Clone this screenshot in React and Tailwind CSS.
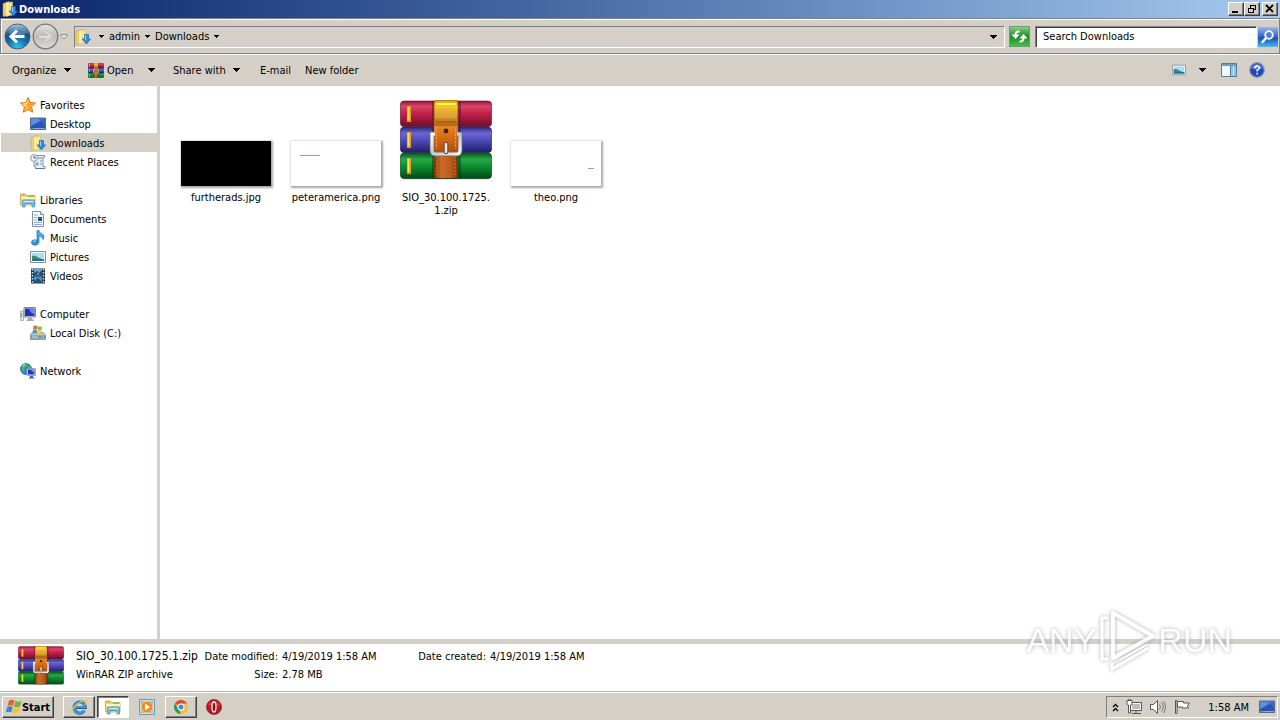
import React from "react";

function ArchiveIcon({ className }) {
  const books = [
    { y: 1, id: "book-red", dark: "#5e0d24" },
    { y: 27, id: "book-blue", dark: "#1f1a5c" },
    { y: 53, id: "book-green", dark: "#043d14" },
  ];
  return (
    <svg viewBox="0 0 92 80" preserveAspectRatio="none" className={className} aria-hidden="true">
      <defs>
        <linearGradient id="book-red" x2="0" y2="1">
          <stop offset="0" stopColor="#8c1838" />
          <stop offset=".2" stopColor="#dc4468" />
          <stop offset=".5" stopColor="#c0204a" />
          <stop offset="1" stopColor="#6e0f2a" />
        </linearGradient>
        <linearGradient id="book-blue" x2="0" y2="1">
          <stop offset="0" stopColor="#2d2878" />
          <stop offset=".25" stopColor="#6a66d4" />
          <stop offset=".55" stopColor="#4b47b4" />
          <stop offset="1" stopColor="#221d66" />
        </linearGradient>
        <linearGradient id="book-green" x2="0" y2="1">
          <stop offset="0" stopColor="#07591c" />
          <stop offset=".25" stopColor="#27a848" />
          <stop offset=".55" stopColor="#0b8a2c" />
          <stop offset="1" stopColor="#04481a" />
        </linearGradient>
        <linearGradient id="belt-top" x2="0" y2="1">
          <stop offset="0" stopColor="#d8a400" />
          <stop offset=".25" stopColor="#f4cc20" />
          <stop offset=".55" stopColor="#d9962a" />
          <stop offset="1" stopColor="#b0600f" />
        </linearGradient>
        <linearGradient id="belt-mid" x2="0" y2="1">
          <stop offset="0" stopColor="#e2862a" />
          <stop offset=".4" stopColor="#d96b12" />
          <stop offset="1" stopColor="#a84a08" />
        </linearGradient>
        <linearGradient id="belt-low" x2="1" y2="0">
          <stop offset="0" stopColor="#7e3408" />
          <stop offset=".3" stopColor="#cc6c26" />
          <stop offset=".7" stopColor="#bc5c1c" />
          <stop offset="1" stopColor="#7e3408" />
        </linearGradient>
        <linearGradient id="buckle" x2="1" y2="1">
          <stop offset="0" stopColor="#ffffff" />
          <stop offset=".5" stopColor="#c4c8cc" />
          <stop offset="1" stopColor="#f4f4f4" />
        </linearGradient>
      </defs>
      {books.map((b) => (
        <g key={b.id}>
          <rect x=".3" y={b.y} width="91.400" height="25.700" rx="4" fill={`url(#${b.id})`} stroke={b.dark} strokeWidth=".6" />
          <path d={`M7 ${b.y + 5}h4v16h-4z`} fill="#e89a1c" />
          <path d={`M8.500 ${b.y + 6}v13`} stroke="#ffe050" strokeWidth="1.800" />
          <rect x="32" y={b.y} width="29" height="25.700" fill={b.dark} opacity=".5" />
        </g>
      ))}
      <path d="M34 3q0-3 3-3h18q3 0 3 3v24H34z" fill="url(#belt-top)" stroke="#8f5208" strokeWidth=".7" />
      <path d="M35 12q11-8 22 0v6H35z" fill="#e8b040" opacity=".5" />
      <path d="M36 4h20" stroke="#fff27a" strokeWidth="2" />
      <path d="M36 22h20" stroke="#8f4f10" strokeWidth="1.500" opacity=".6" />
      <path d="M34 26h24v28H34z" fill="url(#belt-mid)" />
      <path d="M36.500 27v22M55.500 27v22" stroke="#f4a348" strokeDasharray="2 1.500" />
      <circle cx="46" cy="31" r="2.400" fill="#4e1c04" />
      <path d="M34 54h24v22q0 2-3 2H37q-3 0-3-2z" fill="url(#belt-low)" />
      <path d="M37 56v19M55 56v19" stroke="#efa04c" strokeDasharray="2 1.500" opacity=".7" />
      <path d="M34 34h-2v16q0 4 3 4h22q3 0 3-4V34h-2" fill="none" stroke="#6a6a6e" strokeWidth="4.600" />
      <path d="M35 34h-3v16q0 4 3 4h22q3 0 3-4V34h-3" fill="none" stroke="url(#buckle)" strokeWidth="3.200" />
      <path d="M46 44v8" stroke="#63432c" strokeWidth="4.600" strokeLinecap="round" />
      <path d="M46 44v8" stroke="#e6e8ea" strokeWidth="2.600" strokeLinecap="round" />
    </svg>
  );
}

function Icon({ children, className = "size-4" }) {
  return (
    <svg viewBox="0 0 16 16" className={`${className} shrink-0`} fill="none" aria-hidden="true">
      {children}
    </svg>
  );
}

const DownloadsIcon = ({ className }) => (
  <Icon className={className}>
    <path d="M1 2.500 7 .500v14l-6 1z" fill="#f0d070" stroke="#c79e35" strokeWidth=".5" />
    <path d="M4 1.500 10.500 1v13L4 15.500z" fill="#f9e48e" stroke="#d8b452" strokeWidth=".5" />
    <path d="M5 2v12" stroke="#fffbe0" />
    <path d="M9.500 5.500h4v4.500h2L11.500 15 7 10h2.500z" fill="#2f8ed8" stroke="#1468ac" strokeWidth=".7" />
    <path d="M10.500 6v5" stroke="#8bd0f8" />
  </Icon>
);

const StarIcon = () => (
  <Icon>
    <path d="m8 .600 2.200 4.900 5.300.6-3.900 3.700 1 5.400L8 12.600l-4.600 2.600 1-5.400L.500 6.100l5.300-.6z" fill="#fdbb3c" stroke="#d0761a" />
    <path d="M8 3 6.500 6.500l-3.500.5 3 2" stroke="#fff0a6" />
    <path d="m8 3 1.500 3.500 3.500.5-2.700 2.400.7 3.600-3-1.700z" fill="#f99a22" />
  </Icon>
);

const DesktopIcon = () => (
  <Icon>
    <path d="M.500 2h15v11.500H.500z" fill="#2b55b4" stroke="#54688c" />
    <path d="M1 2.500h14L1 10z" fill="#5f8fdc" />
    <path d="M8 3q5 2 7 7V3z" fill="#3b6cc8" />
    <path d="M1 12h14v1H1z" fill="#8fa9c6" />
    <path d="M1 12h3v1H1z" fill="#4cb45c" />
  </Icon>
);

const RecentIcon = () => (
  <Icon>
    <path d="M5 1.500h9.500v2H13v9h2v2H5.500v-2H4V7" fill="#e4edf3" stroke="#8095a2" />
    <circle cx="4" cy="4" r="3.400" fill="#e8f1f6" stroke="#8799a6" />
    <path d="M4 2v2h2" stroke="#53626c" />
    <path d="M6 9h2v2H6zM10 7h2M10 10h2M8 4h4" stroke="#6d98b2" />
    <path d="M5.500 14.500h9" stroke="#52798c" />
  </Icon>
);

const LibrariesIcon = () => (
  <Icon>
    <path d="M.500 2h5l1 1.500h8.500V13H.500z" fill="#f2d777" stroke="#c5a046" strokeWidth=".8" />
    <path d="M1 5h14v2H1z" fill="#fdf2b8" />
    <path d="M2 3h3M8 4.500h6" stroke="#8abb5d" />
    <path d="M2.500 15V9.500q0-1.500 1.500-1.500h9q1.500 0 1.500 1.500V15H12v-3.500H5V15z" fill="#7cc2ec" stroke="#3f94c4" strokeWidth=".8" />
    <path d="M4 9.500h9" stroke="#daf2fd" />
  </Icon>
);

const DocumentsIcon = () => (
  <Icon>
    <path d="M2.500.5h8l3 3v12h-11z" fill="#f8fcff" stroke="#7d91a8" />
    <path d="M10.500.5v3h3" fill="#c9dcec" stroke="#7d91a8" />
    <path d="M4 4h4M4 6.500h3M4 11.500h8M4 13.500h8M4 9h3" stroke="#8eacd0" />
    <path d="M8 6h4v4H8z" fill="#28548e" />
  </Icon>
);

const MusicIcon = () => (
  <Icon>
    <ellipse cx="5" cy="12.500" rx="3.500" ry="2.700" fill="#3298dc" stroke="#1c6fb0" strokeWidth=".7" />
    <path d="M7 .500h2q.5 3 4 4 2 2 0 5 0-3-4-3.500v6.500H7z" fill="#46aae4" stroke="#1c6fb0" strokeWidth=".7" />
    <path d="M3 12q1-1.500 3-1.200" stroke="#b5e2fb" />
  </Icon>
);

const PicturesIcon = ({ className }) => (
  <Icon className={className}>
    <path d="M.500 2.500h15v11H.500z" fill="#fff" stroke="#7b92a4" />
    <path d="M2 4h12v8H2z" fill="#a9dcf5" />
    <path d="M2 7q3-1 6 1.500t6 1.500v2H2z" fill="#2d6c90" />
    <path d="M2 7q2-1 5 1.500L12 10H2z" fill="#438d5a" />
    <path d="M2 11h12v1H2z" fill="#2472b4" />
  </Icon>
);

const VideosIcon = () => (
  <Icon>
    <path d="M1 .500h14v15H1z" fill="#26323d" />
    <path d="M4 1h8v6.500H4z" fill="#5ba7d7" />
    <path d="M4 8.500h8V15H4z" fill="#4492cf" />
    <path d="m4 5 3-2 2 2 3-3v5.500H4zM4 13l4-3 4 4v1H4z" fill="#1d547f" />
    <path d="M2.500 1v14M13.500 1v14" stroke="#dbe8ef" strokeWidth="1.500" strokeDasharray="1.500 1.500" />
    <path d="M7 5h2v2H7z" fill="#dd6d58" />
  </Icon>
);

const ComputerIcon = () => (
  <Icon>
    <path d="M.500 5h3v9.500h-3z" fill="#dce7e5" stroke="#8e9da2" strokeWidth=".7" />
    <path d="M1.500 7v4" stroke="#57b544" />
    <path d="M4 1.500h11.500v9.500H4z" fill="#dedfdf" stroke="#80868e" />
    <path d="M5 2.500h9.500V10H5z" fill="#1d35b4" />
    <path d="M9 3h5v5Q10 7 9 3" fill="#6488ea" />
    <path d="M8 11.500h4v2h2v1.500H6.500v-1.500H8z" fill="#a6abb4" />
  </Icon>
);

const DiskIcon = () => (
  <Icon>
    <path d="m1 9 2-1.500h10L15.500 10v4.500H.500V10z" fill="#b8c4cb" stroke="#657984" strokeWidth=".7" />
    <path d="M1 10.500h14v3H1z" fill="#7b98a8" />
    <path d="M2 12h6" stroke="#cbe0e8" />
    <path d="M12 12h2" stroke="#70e45c" strokeWidth="1.500" />
    <path d="M3.500 1q2-1 4 0L7 4.500q-2-1-4 0z" fill="#ed6430" />
    <path d="M8 1.200q2 1 4 0L11.500 5q-2 1-4 0z" fill="#82bc37" />
    <path d="M3 5q2-1 4 0l-.5 3.500q-2-1-4 0z" fill="#3f91d8" />
    <path d="M7.500 5.500q2 1 4 0L11 9q-2 1-4 0z" fill="#f9c82b" />
  </Icon>
);

const NetworkIcon = () => (
  <Icon>
    <circle cx="6" cy="6" r="5.500" fill="#2e87ca" stroke="#185f9d" strokeWidth=".7" />
    <path d="M2 3q2-3 5-2 0 3-2 3.500T5 8q-2 1-3-1zM8 2l3 3-1 3-2-2z" fill="#52b95b" />
    <path d="M2.500 3 5 1.500" stroke="#c1eefa" />
    <path d="M7 5.500h8.500v7H7z" fill="#e1e3e5" stroke="#77869b" strokeWidth=".7" />
    <path d="M8 6.500h6.500v5H8z" fill="#1c36bd" />
    <path d="M11 7h3v3z" fill="#759bf1" />
    <path d="M10 13h3v1.500h1.500v1H9v-1h1z" fill="#3260ba" />
  </Icon>
);

function Caret() {
  return (
    <svg viewBox="0 0 7 4" className="h-1 w-[7px] shrink-0" aria-hidden="true" shapeRendering="crispEdges">
      <path d="M0 0h7v1H6v1H5v1H4v1H3V3H2V2H1V1H0z" fill="#000" />
    </svg>
  );
}

function SmallCaret() {
  return (
    <svg viewBox="0 0 5 3" className="h-[3px] w-[5px] shrink-0" aria-hidden="true" shapeRendering="crispEdges">
      <path d="M0 0h5v1H4v1H3v1H2V2H1V1H0z" fill="#000" />
    </svg>
  );
}

const raised =
  "border border-t-white border-l-white border-r-[#404040] border-b-[#404040] bg-[#d4d0c8] shadow-[inset_-1px_-1px_0_#808080]";

function WindowButton({ label, children, className = "" }) {
  return (
    <button aria-label={label} className={`flex h-[14px] w-4 items-center justify-center ${raised} ${className}`}>
      <svg viewBox="0 0 12 10" className="h-[10px] w-3" fill="none" stroke="#000" shapeRendering="crispEdges" aria-hidden="true">
        {children}
      </svg>
    </button>
  );
}

function TitleBar() {
  return (
    <header className="flex h-[18px] shrink-0 items-center bg-linear-to-r from-[#0a246a] to-[#a6caf0] pr-[2px] pl-[2px] text-white">
      <DownloadsIcon />
      <h1 className="ml-px flex-1 font-bold">Downloads</h1>
      <WindowButton label="Minimize">
        <path d="M2 8h6" strokeWidth="2" />
      </WindowButton>
      <WindowButton label="Restore">
        <path d="M4 1h6M4 1.500h6M4.500 1v3M9.500 1v5M8 5.500h2M2 4h6M2 4.500h6M2.500 4v5M7.500 4v5M2 8.500h6" />
      </WindowButton>
      <WindowButton label="Close" className="ml-[2px]">
        <path d="m2 1 7 7M9 1 2 8" strokeWidth="1.800" shapeRendering="auto" />
      </WindowButton>
    </header>
  );
}

function NavBar() {
  return (
    <div className="flex h-9 shrink-0 items-center border border-[#808080] pt-px pr-px pl-[3px] shadow-[inset_1px_1px_0_#fff]">
      <button aria-label="Back" className="size-[27px] shrink-0">
        <svg viewBox="0 0 27 27" aria-hidden="true">
          <defs>
            <radialGradient id="nav-back" cx=".5" cy=".95" r=".9">
              <stop offset="0" stopColor="#35c4f0" />
              <stop offset=".45" stopColor="#136fa8" />
              <stop offset=".75" stopColor="#14518a" />
              <stop offset="1" stopColor="#9fc4dc" />
            </radialGradient>
          </defs>
          <circle cx="13.500" cy="13.500" r="12.500" fill="url(#nav-back)" stroke="#4a5b68" />
          <path d="M4 10q9-11 19 0-9 4-19 0" fill="#fff" opacity=".25" />
          <path d="M20.500 13.500H8M13 7.500l-6 6 6 6" stroke="#fff" strokeWidth="3" fill="none" />
        </svg>
      </button>
      <button aria-label="Forward" className="ml-px size-[27px] shrink-0">
        <svg viewBox="0 0 27 27" aria-hidden="true">
          <defs>
            <linearGradient id="nav-forward" x2="0" y2="1">
              <stop offset="0" stopColor="#e6e4e2" />
              <stop offset=".5" stopColor="#bdbab7" />
              <stop offset="1" stopColor="#dedcd9" />
            </linearGradient>
          </defs>
          <circle cx="13.500" cy="13.500" r="12.300" fill="url(#nav-forward)" stroke="#77777a" strokeWidth="1.300" />
          <path d="M7 13.500h12M14 8l5.500 5.500L14 19" stroke="#dddbd8" strokeWidth="3" fill="none" />
          <path d="M7 12h9M14 7l6.500 6.500L14 20" stroke="#a8a6a4" strokeWidth=".7" fill="none" />
        </svg>
      </button>
      <button aria-label="Recent pages" className="mr-[6px] ml-px h-5 w-2 shrink-0">
        <svg viewBox="0 0 8 6" className="h-[6px] w-2" aria-hidden="true">
          <path d="M.500.700h7L4 5z" fill="#f4f4f4" stroke="#77777a" strokeWidth=".8" />
        </svg>
      </button>
      <nav
        aria-label="Address"
        className="flex h-[22px] flex-1 items-center gap-[5px] border border-t-[#808080] border-r-white border-b-white border-l-[#808080] pr-[3px]"
      >
        <DownloadsIcon />
        <span className="ml-[3px]"><SmallCaret /></span>
        <a href="#admin">admin</a>
        <SmallCaret />
        <a href="#downloads">Downloads</a>
        <SmallCaret />
        <button aria-label="Previous locations" className="ml-auto flex w-4 justify-center">
          <Caret />
        </button>
      </nav>
      <button aria-label="Refresh" className="ml-1 size-[21px] shrink-0">
        <svg viewBox="0 0 21 21" aria-hidden="true">
          <defs>
            <linearGradient id="refresh" x2="0" y2="1">
              <stop offset="0" stopColor="#8fd08a" />
              <stop offset=".35" stopColor="#3f9e44" />
              <stop offset=".55" stopColor="#1f9226" />
              <stop offset="1" stopColor="#46c24a" />
            </linearGradient>
          </defs>
          <rect x=".5" y=".5" width="20" height="20" fill="url(#refresh)" stroke="#6e9a6e" />
          <path d="M10.500 5.500q-4-.5-4 4" fill="none" stroke="#fff" strokeWidth="2" />
          <path d="M2.500 8.500h8l-4 4.500z" fill="#fff" />
          <path d="M10.500 15.500q4 .5 4-4" fill="none" stroke="#fff" strokeWidth="2" />
          <path d="M10.500 12.500h8l-4-4.500z" fill="#fff" />
        </svg>
      </button>
      <input
        type="search"
        aria-label="Search Downloads"
        placeholder="Search Downloads"
        className="ml-[5px] h-[22px] w-[222px] border border-t-[#808080] border-r-white border-b-white border-l-[#808080] bg-white pl-[7px] shadow-[inset_1px_1px_0_#404040] outline-none placeholder:text-black"
      />
      <button aria-label="Search" className="ml-px size-5 shrink-0">
        <svg viewBox="0 0 20 20" aria-hidden="true">
          <defs>
            <linearGradient id="search" x2="0" y2="1">
              <stop offset="0" stopColor="#9cb8ec" />
              <stop offset=".45" stopColor="#3c68cc" />
              <stop offset=".55" stopColor="#1c50c0" />
              <stop offset="1" stopColor="#48b8f4" />
            </linearGradient>
          </defs>
          <rect width="20" height="20" fill="url(#search)" />
          <circle cx="11" cy="8" r="3.800" fill="#4a7ed8" stroke="#fff" strokeWidth="1.800" />
          <path d="m8 11-3.500 4" stroke="#fff" strokeWidth="2.400" strokeLinecap="round" />
        </svg>
      </button>
    </div>
  );
}

function CommandBar() {
  return (
    <div role="toolbar" aria-label="Commands" className="flex h-8 shrink-0 items-center border-t border-white pr-[15px] pb-px pl-3">
      <button className="flex w-[76px] items-center justify-between pr-[17px]">
        Organize <Caret />
      </button>
      <button className="flex w-[67px] items-center">
        <ArchiveIcon className="mr-[3px] h-[15px] w-4 shrink-0" />
        <span className="flex-1 text-left">Open</span>
        <Caret />
      </button>
      <button className="ml-[18px] flex w-[67px] items-center justify-between">
        Share with <Caret />
      </button>
      <button className="ml-5 w-[45px] text-left">E-mail</button>
      <button>New folder</button>
      <button aria-label="Change view" className="ml-auto flex items-center gap-[13px]">
        <PicturesIcon className="size-[14px]" />
        <Caret />
      </button>
      <button aria-label="Preview pane" className="ml-[15px]">
        <Icon>
          <path d="M.500 1.500h15v13H.500z" fill="#f4f8fb" stroke="#4f7f9f" />
          <path d="M1 2h14v2H1z" fill="#6f9cbf" />
          <path d="M10 4h5v10h-5z" fill="#8cc8e0" />
          <path d="M9.500 4v10" stroke="#4f7f9f" />
          <path d="M12.500 5v8" stroke="#c6e6f2" />
        </Icon>
      </button>
      <button aria-label="Help" className="ml-3">
        <svg viewBox="0 0 16 16" className="size-4" aria-hidden="true">
          <circle cx="8" cy="8" r="7.300" fill="#2848b0" stroke="#8f9ab8" strokeWidth="1.200" />
          <path d="M2 6q6-8 12 0-6 3-12 0" fill="#86a7ec" opacity=".6" />
          <path d="M5.800 6.200q.3-2.200 2.400-2.200T10.400 6Q10.400 7.300 8.200 8.200v1.300M8.200 10.800v1.700" fill="none" stroke="#fff" strokeWidth="1.500" />
        </svg>
      </button>
    </div>
  );
}

const groups = [
  {
    name: "Favorites",
    icon: StarIcon,
    items: [
      ["Desktop", DesktopIcon],
      ["Downloads", DownloadsIcon],
      ["Recent Places", RecentIcon],
    ],
  },
  {
    name: "Libraries",
    icon: LibrariesIcon,
    items: [
      ["Documents", DocumentsIcon],
      ["Music", MusicIcon],
      ["Pictures", PicturesIcon],
      ["Videos", VideosIcon],
    ],
  },
  { name: "Computer", icon: ComputerIcon, items: [["Local Disk (C:)", DiskIcon]] },
  { name: "Network", icon: NetworkIcon, items: [] },
];

function Sidebar() {
  return (
    <nav aria-label="Folders" className="flex w-40 shrink-0 flex-col gap-[19px] border-r-[3px] border-[#d4d0c8] bg-white pt-[9px] pl-px">
      {groups.map(({ name, icon: GroupIcon, items }) => (
        <section key={name}>
          <h2>
            <a href="#group" className="flex h-[19px] items-center gap-1 pl-[19px]">
              <GroupIcon /> <span className="pt-[2px]">{name}</span>
            </a>
          </h2>
          <ul>
            {items.map(([label, ItemIcon]) => (
              <li key={label} className={label === "Downloads" ? "bg-[#d4d0c8]" : ""}>
                <a href="#folder" className="flex h-[19px] items-center gap-1 pl-[29px]">
                  <ItemIcon /> <span className="pt-[2px]">{label}</span>
                </a>
              </li>
            ))}
          </ul>
        </section>
      ))}
    </nav>
  );
}

const thumb = "mb-px h-[45px] w-[90px] shadow-[1px_1px_2px_1px_rgba(0,0,0,0.35)]";

function Files() {
  const files = [
    { name: "furtherads.jpg", art: <div className={`${thumb} bg-black`} /> },
    {
      name: "peteramerica.png",
      art: (
        <div className={`${thumb} bg-white pt-[14px] pl-[9px]`}>
          <div className="h-px w-5 bg-[#b78ad0]" />
        </div>
      ),
    },
    {
      name: "SIO_30.100.1725.1.zip",
      lines: ["SIO_30.100.1725.", "1.zip"],
      art: <ArchiveIcon className="mb-[7px] h-20 w-[92px]" />,
    },
    {
      name: "theo.png",
      art: (
        <div className={`${thumb} bg-white pt-[27px] pl-[77px]`}>
          <div className="h-px w-[6px] bg-[#9a94dc]" />
        </div>
      ),
    },
  ];
  return (
    <main className="flex-1 overflow-hidden bg-white pt-2 pl-[11px]">
      <ul className="flex flex-wrap">
        {files.map((f) => (
          <li key={f.name} className="flex w-[110px] flex-col items-center">
            <div className="flex h-[93px] items-end">{f.art}</div>
            <p className="mt-1 text-center whitespace-nowrap">
              {(f.lines ?? [f.name]).map((line) => (
                <span key={line} className="block">{line}</span>
              ))}
            </p>
          </li>
        ))}
      </ul>
    </main>
  );
}

function Details() {
  return (
    <footer className="flex h-[53px] shrink-0 items-start border-t-[5px] border-b border-t-[#d4d0c8] border-b-[#b8b4ac] bg-white pl-[18px]">
      <ArchiveIcon className="mt-[2px] h-[39px] w-[46px] shrink-0" />
      <div className="ml-3 grid grid-cols-[126px_76px_4px_134px_70px_4px_auto] grid-rows-[18px_18px] items-center pt-[3px] whitespace-nowrap">
        <strong className="col-start-1 text-[12px] font-normal">SIO_30.100.1725.1.zip</strong>
        <span className="col-start-2 text-right">Date modified:</span>
        <span className="col-start-4">4/19/2019 1:58 AM</span>
        <span className="col-start-5 text-right">Date created:</span>
        <span className="col-start-7">4/19/2019 1:58 AM</span>
        <span className="col-start-1 row-start-2">WinRAR ZIP archive</span>
        <span className="col-start-2 row-start-2 text-right">Size:</span>
        <span className="col-start-4 row-start-2">2.78 MB</span>
      </div>
    </footer>
  );
}

function Taskbar() {
  const task = "flex h-[22px] w-8 items-center justify-center";
  return (
    <div className="flex h-7 shrink-0 items-center border-t border-white bg-[#d4d0c8] pt-px pr-[2px] pl-[2px]">
      <button className={`mr-[9px] flex h-[22px] w-[52px] items-center justify-center font-bold ${raised}`}>
        <Icon>
          <path d="M3 1.500q3-1.500 5.500 0L7 7Q4.500 5.500 1.500 7z" fill="#e9612d" />
          <path d="M9.300 2q3 1.500 6.200 0L14 7.500q-3 1.500-6 0z" fill="#73b72f" />
          <path d="M1.200 8q3-1.500 5.500 0l-1.500 5.500Q3 12-.300 13.500z" fill="#3487d4" />
          <path d="M7.700 8.500q3 1.500 6 0l-1.500 5.500q-3 1.500-6 0z" fill="#f7c42c" />
        </Icon>
        Start
      </button>
      <button aria-label="Internet Explorer" className={`${task} mr-[2px] ${raised}`}>
        <Icon>
          <path d="M13.500 11.500A5.600 5.600 0 1 1 14.300 8.500H5" stroke="#1560b0" strokeWidth="3" />
          <path d="M13.300 11.500A5.500 5.500 0 1 1 14 8H5" stroke="#46a6ea" strokeWidth="1.500" />
          <path d="M1 15Q-.500 11.500 5.500 6T15 1.500q1.200 1-1 4" stroke="#eec04a" strokeWidth="1.300" />
        </Icon>
      </button>
      <button
        aria-label="Windows Explorer"
        aria-pressed="true"
        className={`${task} mr-[10px] border border-t-[#404040] border-r-white border-b-white border-l-[#404040] bg-white shadow-[inset_1px_1px_0_#808080]`}
      >
        <LibrariesIcon />
      </button>
      <button aria-label="Media Player" className="mr-[10px]">
        <Icon>
          <path d="M.500.500h15v15H.500z" fill="#bfdff3" stroke="#609ec7" />
          <path d="M2 2h12v12H2z" fill="#86bde0" />
          <circle cx="8" cy="8" r="6" fill="#f28b1b" stroke="#fbd29a" />
          <path d="m6 4.500 5 3.500-5 3.500z" fill="#fff" />
        </Icon>
      </button>
      <button aria-label="Chrome" className={`${task} mr-[9px] ${raised}`}>
        <Icon>
          <circle cx="8" cy="8" r="7" fill="#f2c233" />
          <path d="M8 8 1.900 4.500A7 7 0 0 1 14.100 4.500H8z" fill="#dc4739" />
          <path d="M1.900 4.500 5.500 10 8 15A7 7 0 0 1 1.900 4.500" fill="#2a9b55" />
          <circle cx="8" cy="8" r="3.500" fill="#fff" />
          <circle cx="8" cy="8" r="2.500" fill="#4283ec" />
        </Icon>
      </button>
      <button aria-label="Opera">
        <Icon>
          <circle cx="8" cy="8" r="7.500" fill="#b81a22" stroke="#7d161c" strokeWidth=".7" />
          <path d="M2 6q6-8 12 0-6 2-12 0" fill="#f16a68" opacity=".5" />
          <ellipse cx="8" cy="8" rx="2" ry="5" fill="#8e0d16" stroke="#f4eeee" strokeWidth="1.300" />
        </Icon>
      </button>
      <div className="ml-auto flex h-[22px] items-center border border-t-[#808080] border-r-white border-b-white border-l-[#808080] pr-[2px] pl-[5px]">
        <button aria-label="Show hidden icons" className="mr-[7px]">
          <svg viewBox="0 0 7 9" className="h-[9px] w-[7px]" fill="none" stroke="#000" strokeWidth="1.300" aria-hidden="true">
            <path d="m1 4 2.500-2.500L6 4M1 8l2.500-2.500L6 8" />
          </svg>
        </button>
        <button aria-label="Network status" className="mr-2">
          <Icon>
            <path d="M4.500 3.500h11v8h-11z" fill="#bcbcbc" stroke="#555" />
            <path d="M5.500 4.500h9v6h-9z" stroke="#fff" />
            <path d="M10 12v2M6 14.500h9" stroke="#555" />
            <path d="M1 1.500h5v3.500q0 1-1.500 1v8h-2V6Q1 6 1 5z" fill="#fff" stroke="#555" />
            <path d="M2.500 0v2M4.500 0v2" stroke="#555" />
          </Icon>
        </button>
        <button aria-label="Volume" className="mr-2">
          <Icon>
            <path d="M.500 5.500h3l4-4v13l-4-4h-3z" fill="#fff" stroke="#555" />
            <path d="M9.500 5.500q2 2.500 0 5M11.500 3.500q3.500 4.500 0 9M13.500 2q4 6 0 12" stroke="#777" />
          </Icon>
        </button>
        <button aria-label="Action Center" className="mr-[18px]">
          <Icon>
            <path d="M1.500 1.500h1.500v13H1.500z" fill="#fff" stroke="#555" />
            <path d="M3.500 2.500h6v1.500h6l-2 3 1 2H8.500V8h-5z" fill="#fff" stroke="#555" />
          </Icon>
        </button>
        <time className="mr-[10px]">1:58 AM</time>
        <button aria-label="Show desktop">
          <DesktopIcon />
        </button>
      </div>
    </div>
  );
}

function Watermark() {
  return (
    <div className="pointer-events-none absolute right-12 bottom-12 flex items-center gap-[2px] font-['Liberation_Sans',sans-serif] text-[34px] leading-none text-white opacity-80 drop-shadow-[0_0_2px_#999]">
      <span>ANY</span>
      <svg viewBox="0 0 58 64" className="h-16 w-[58px]" fill="none" stroke="#fff" strokeLinejoin="round" aria-hidden="true">
        <path d="M15 5v45L55 28z" strokeWidth="4" />
        <path d="M10 10H4v41h6M14 55v6l36-21" strokeWidth="3" />
        <path d="m22 52 28-16" strokeWidth="2" />
      </svg>
      <span>RUN</span>
    </div>
  );
}

export default function App() {
  return (
    <div className="relative flex h-screen flex-col overflow-hidden bg-[#d4d0c8] font-['DejaVu_Sans_Condensed','DejaVu_Sans',sans-serif] text-[11px] leading-[13px] text-black">
      <TitleBar />
      <NavBar />
      <CommandBar />
      <div className="flex min-h-0 flex-1">
        <Sidebar />
        <Files />
      </div>
      <Details />
      <Taskbar />
      <Watermark />
    </div>
  );
}
